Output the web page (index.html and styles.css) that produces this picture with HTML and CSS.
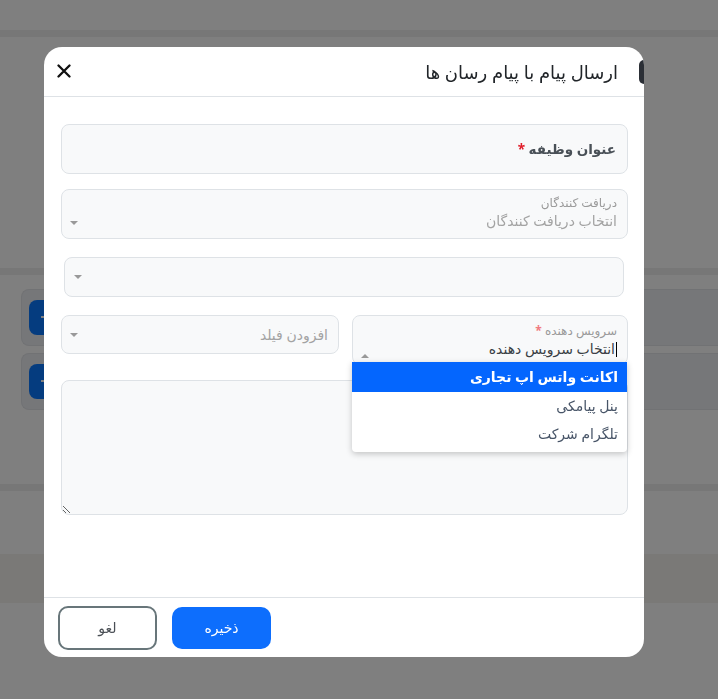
FILE: index.html
```html
<!DOCTYPE html>
<html lang="fa" dir="rtl">
<head>
<meta charset="utf-8">
<title>ارسال پیام</title>
<link rel="stylesheet" href="styles.css">
</head>
<body>
<div class="page" dir="ltr">
  <div class="topbar"></div>
  <div class="hline first"></div>
  <div class="hline second"></div>
  <div class="card card-a"><span class="add"><span class="plus"></span></span></div>
  <div class="card card-b"><span class="add"><span class="plus"></span></span></div>
  <div class="hline third"></div>
  <div class="band"></div>
</div>
<div class="backdrop"></div>

<div class="modal">
  <div class="modal-header">
    <h5 class="title">ارسال پیام با پیام رسان ها</h5>
    <button class="close" aria-label="بستن">
      <svg width="14" height="14" viewBox="0 0 14 14"><path d="M1.5 1.5 L12.5 12.5 M12.5 1.5 L1.5 12.5" stroke="#111" stroke-width="2.3" stroke-linecap="round" fill="none"/></svg>
    </button>
    <span class="edge"></span>
  </div>

  <div class="modal-body">
    <div class="field field-title">
      <span class="strong-label">عنوان وظیفه <span class="req">*</span></span>
    </div>

    <div class="field field-select">
      <div class="sel-text">
        <span class="small-label">دریافت کنندگان</span>
        <span class="placeholder">انتخاب دریافت کنندگان</span>
      </div>
      <span class="caret"></span>
    </div>

    <div class="field field-plain">
      <span class="caret"></span>
    </div>

    <div class="row">
      <div class="col col-service">
        <div class="field field-service">
          <div class="sel-text">
            <span class="small-label">سرویس دهنده <span class="req light">*</span></span>
            <span class="value"><span class="cursor"></span>انتخاب سرویس دهنده</span>
          </div>
          <span class="caret up"></span>
        </div>
        <ul class="menu">
          <li class="opt active">اکانت واتس اپ تجاری</li>
          <li class="opt">پنل پیامکی</li>
          <li class="opt">تلگرام شرکت</li>
        </ul>
      </div>
      <div class="col">
        <div class="field field-add">
          <span class="placeholder">افزودن فیلد</span>
          <span class="caret"></span>
        </div>
      </div>
    </div>

    <textarea class="textarea"></textarea>
  </div>

  <div class="modal-footer">
    <button class="btn btn-save">ذخیره</button>
    <button class="btn btn-cancel">لغو</button>
  </div>
</div>
</body>
</html>
```

FILE: styles.css
```css
* { box-sizing: border-box; }
html, body { margin: 0; padding: 0; }
body {
  width: 718px;
  height: 699px;
  overflow: hidden;
  background: #ffffff;
  font-family: "Noto Sans", "DejaVu Sans", sans-serif;
  color: #212529;
}

/* underlying page */
.page { display: flex; flex-direction: column; }
.topbar { height: 30px; background: #ffffff; }
.hline { height: 7px; background: #eeeeee; }
.hline.second { margin-top: 231px; }
.hline.third { margin-top: 74px; }
.card {
  height: 57px;
  margin-left: 21px;
  background: #eceef3;
  border: 1px solid #e2e4e8;
  border-right: none;
  border-radius: 8px 0 0 8px;
  display: flex;
  align-items: center;
  padding-left: 7px;
}
.card-a { margin-top: 14px; }
.card-b { margin-top: 7px; }
.add {
  width: 36px; height: 35px;
  border-radius: 8px;
  background: #0b79ff;
  position: relative;
  display: block;
}
.plus { position: absolute; left: 12px; top: 16px; width: 14px; height: 2px; background: #fff; }
.band { margin-top: 63px; height: 49px; background: #f5f3ef; }

.backdrop {
  position: fixed; inset: 0;
  background: rgba(0, 0, 0, 0.5);
}

/* modal */
.modal {
  position: fixed;
  left: 44px; top: 47px;
  width: 600px; height: 610px;
  background: #ffffff;
  border-radius: 18px;
  overflow: hidden;
  display: flex;
  flex-direction: column;
}
.modal-header {
  height: 50px;
  flex: none;
  border-bottom: 1px solid #dee2e6;
  display: flex;
  align-items: center;
  justify-content: space-between;
  padding: 0 26px 0 13px;
  position: relative;
}
.title {
  margin: 0;
  font-size: 18px;
  font-weight: 500;
  color: #212529;
  line-height: 24px;
}
.close {
  border: 0; background: none; padding: 0;
  width: 14px; height: 14px;
  display: block;
  margin-top: -2px;
}
.close svg { display: block; }
.edge {
  position: absolute;
  right: 0; top: 13px;
  width: 5px; height: 24px;
  background: #2b2f36;
  border-radius: 6px 0 0 6px;
}

.modal-body {
  flex: 1;
  padding: 27px 16px 0 17px;
  display: flex;
  flex-direction: column;
}
.field {
  background: #f8f9fa;
  border: 1px solid #dee2e6;
  border-radius: 8px;
  display: flex;
  justify-content: space-between;
  align-items: center;
  padding: 0 10px 0 8px;
}
.field-title { height: 50px; padding-right: 11px; }
.strong-label { font-size: 13.5px; font-weight: 700; color: #495057; }
.req { color: #e11d2a; font-weight: 700; }
.req.light { color: #f07a80; }

.field-select {
  margin-top: 15px;
  height: 50px;
  align-items: flex-end;
  padding-top: 6px;
  padding-bottom: 7px;
}
.sel-text { display: flex; flex-direction: column; }
.small-label { font-size: 12px; line-height: 16px; color: #9a9a9a; }
.placeholder { font-size: 14px; line-height: 20px; color: #a3a3a3; }
.value { font-size: 14px; line-height: 20px; color: #3a3f45; }
.cursor {
  display: inline-block;
  width: 1px; height: 15px;
  background: #000;
  vertical-align: -3px;
  margin-left: 1px;
}
.caret {
  width: 0; height: 0;
  border-left: 4.5px solid transparent;
  border-right: 4.5px solid transparent;
  border-top: 4.5px solid #999;
  margin-bottom: 6px;
}
.caret.up {
  border-top: 0;
  border-bottom: 4.5px solid #999;
  margin-bottom: 1px;
}
.field-plain {
  margin: 18px 4px 0 3px;
  height: 40px;
  padding-left: 9px;
  justify-content: flex-end;
}
.field-plain .caret { margin-bottom: 0; }

.row {
  margin-top: 18px;
  display: grid;
  grid-template-columns: 276px 278px;
  column-gap: 13px;
  align-items: start;
}
.col { position: relative; }
.field-service {
  height: 50px;
  align-items: flex-end;
  padding-top: 7px;
  padding-bottom: 5px;
}
.field-add { height: 39px; }
.field-add .caret { margin-bottom: 0; }

.menu {
  position: absolute;
  top: 47px; left: 0; right: 1px;
  margin: 0;
  padding: 0 0 4px;
  list-style: none;
  background: #ffffff;
  border-radius: 0 0 4px 4px;
  box-shadow: 0 2px 6px rgba(0, 0, 0, 0.22);
  z-index: 2;
}
.opt {
  height: 28px;
  line-height: 28px;
  padding: 0 9px;
  font-size: 14px;
  color: #475467;
}
.opt.active {
  height: 30px;
  line-height: 30px;
  background: #0466fe;
  color: #ffffff;
  font-weight: 700;
}

.textarea {
  margin-top: 15px;
  height: 135px;
  background: #f8f9fa;
  border: 1px solid #dee2e6;
  border-radius: 8px;
  resize: vertical;
  font: inherit;
}

.modal-footer {
  flex: none;
  height: 60px;
  border-top: 1px solid #dee2e6;
  display: flex;
  justify-content: flex-end;
  align-items: center;
  gap: 15px;
  padding: 0 14px;
}
.btn {
  width: 99px;
  font-family: inherit;
  font-size: 14px;
  border-radius: 10px;
  cursor: pointer;
}
.btn-save {
  height: 42px;
  background: #0d6efd;
  color: #ffffff;
  border: 0;
}
.btn-cancel {
  height: 44px;
  background: #ffffff;
  color: #4a4f55;
  border: 2px solid #68767a;
}
```
